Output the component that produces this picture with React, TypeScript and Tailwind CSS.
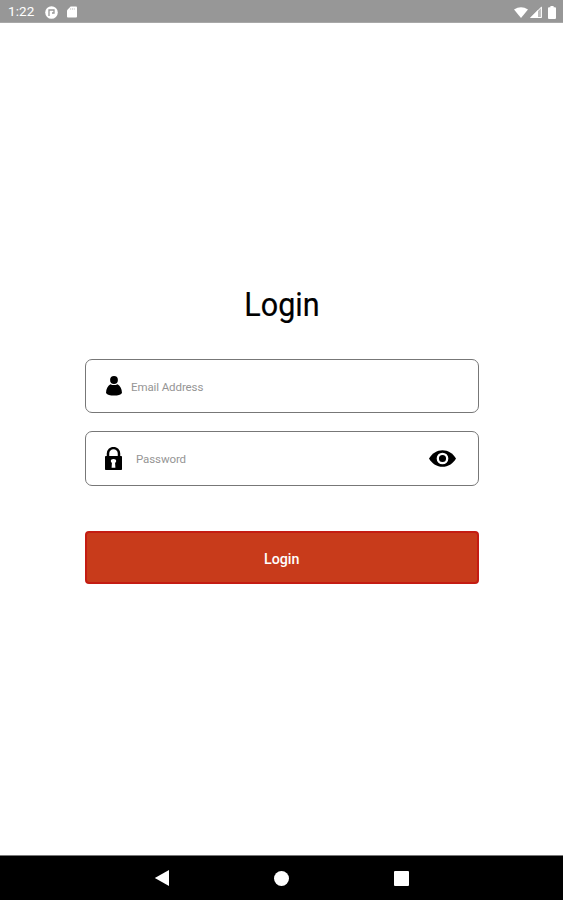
import React from 'react';

const StatusBar: React.FC = () => (
  <header className="flex h-[23px] shrink-0 items-center justify-between border-b border-[#a8a8a8] bg-[#979797] pl-2 pr-[7px] pt-0.5 text-white">
    <div className="flex items-center">
      <span className="w-[37px] text-[13.5px] leading-none tracking-[0.1px]">1:22</span>
      <svg className="h-[13px] w-[13px]" viewBox="0 0 13 13">
        <circle cx="6.5" cy="6.5" r="6.3" fill="#fff" />
        <path d="M4 10V4h5v3H7" fill="none" stroke="#979797" strokeWidth="1.3" />
      </svg>
      <svg className="ml-[9px] h-3 w-[10px]" viewBox="0 0 11 12" fill="#fff">
        <path d="M4 0h6a1 1 0 0 1 1 1v10a1 1 0 0 1-1 1H1a1 1 0 0 1-1-1V4z" />
        <path d="M4 1.8v1.8M6 1.8v1.8M8 1.8v1.8" stroke="#bdbdbd" strokeWidth="0.8" />
      </svg>
    </div>
    <div className="flex items-center">
      <svg className="h-[11px] w-[14px]" viewBox="0 0 14 11" fill="#fff">
        <path d="M0 2.6Q7-2.2 14 2.6L7 11z" />
      </svg>
      <svg className="ml-0.5 h-3 w-3" viewBox="0 0 12 12" fill="#fff">
        <path d="M0 12L12 0v12z" opacity="0.35" />
        <path d="M0 12L8 4v8z" />
        <path d="M11.4 1.2v10.3H1.2z" fill="none" stroke="#fff" strokeWidth="1" />
      </svg>
      <svg className="ml-1.5 h-[13px] w-2" viewBox="0 0 8 13" fill="#fff">
        <path d="M2.4 0h3.2v1.3H7a1 1 0 0 1 1 1V12a1 1 0 0 1-1 1H1a1 1 0 0 1-1-1V2.3a1 1 0 0 1 1-1h1.4z" />
      </svg>
    </div>
  </header>
);

const UserIcon: React.FC = () => (
  <svg className="h-5 w-4 shrink-0" viewBox="0 0 16 20">
    <circle cx="8" cy="4" r="3.9" />
    <path d="M4.4 8.2Q8 10 11.6 8.2C14.4 9.8 15.8 12.8 16 16.9Q14 19.6 8 19.6T0 16.9C.2 12.8 1.6 9.8 4.4 8.2z" />
  </svg>
);

const LockIcon: React.FC = () => (
  <svg className="h-[23px] w-[17px] shrink-0" viewBox="0 0 17 23">
    <path d="M3 10V6.6a5.5 5.5 0 0 1 11 0V10" fill="none" stroke="#000" strokeWidth="2.5" />
    <rect y="9" width="17" height="14" rx="0.8" />
    <path d="M5.8 14.1a2.7 2.2 0 0 1 5.4 0c0 .8-.5 1.4-1.1 1.8l.3 4.8H6.6l.3-4.8c-.6-.4-1.1-1-1.1-1.8z" fill="#fff" />
  </svg>
);

const EyeIcon: React.FC = () => (
  <svg className="h-[17px] w-[27px] shrink-0" viewBox="0 0 27 17">
    <path d="M0 8.5C3.2 3.2 8 .2 13.5 .2S23.8 3.2 27 8.5c-3.2 5.3-8 8.3-13.5 8.3S3.2 13.8 0 8.5z" />
    <circle cx="13.5" cy="8.5" r="4.7" fill="none" stroke="#fff" strokeWidth="2.3" />
  </svg>
);

const App: React.FC = () => {
  return (
    <div className="flex h-[900px] w-[563px] flex-col overflow-hidden bg-white font-['Roboto',sans-serif]">
      <StatusBar />

      <main className="flex flex-1 flex-col px-[85px] pt-[262px]">
        <h1 className="h-[75px] origin-center translate-x-[0.5px] scale-x-[0.925] text-center text-[33px] leading-10 text-black [-webkit-text-stroke:0.2px_#000]">
          Login
        </h1>

        <div className="-mt-px flex h-[54px] w-[394px] items-center rounded-[7px] border border-[#777] pl-5">
          <UserIcon />
          <span className="ml-[9px] pt-1 text-[11.5px] leading-none tracking-[-0.1px] text-[#959595]">Email Address</span>
        </div>

        <div className="mt-[18px] flex h-[55px] w-[394px] items-center rounded-[7px] border border-[#777] pl-[19px] pr-[22px]">
          <LockIcon />
          <span className="ml-[14px] flex-1 pt-[3px] text-[11.5px] leading-none tracking-[-0.1px] text-[#959595]">Password</span>
          <EyeIcon />
        </div>

        <button className="mt-[45px] h-[53px] w-[394px] rounded-[4px] border-2 border-[#c41c12] bg-[#c83b1b] pt-1 text-[15px] font-medium leading-none text-white">
          <span className="inline-block scale-x-[0.95]">Login</span>
        </button>
      </main>

      {/* Android navigation */}
      <nav className="flex h-[45px] shrink-0 items-center justify-center gap-[105px] border-t border-[#777] bg-black">
        <svg className="h-4 w-[15px]" viewBox="0 0 15 16" fill="#fff">
          <path d="M.8 8L15 0v16z" />
        </svg>
        <div className="h-[15px] w-[15px] rounded-full bg-white" />
        <div className="h-[15px] w-[15px] rounded-[1px] bg-white" />
      </nav>
    </div>
  );
};

export default App;
